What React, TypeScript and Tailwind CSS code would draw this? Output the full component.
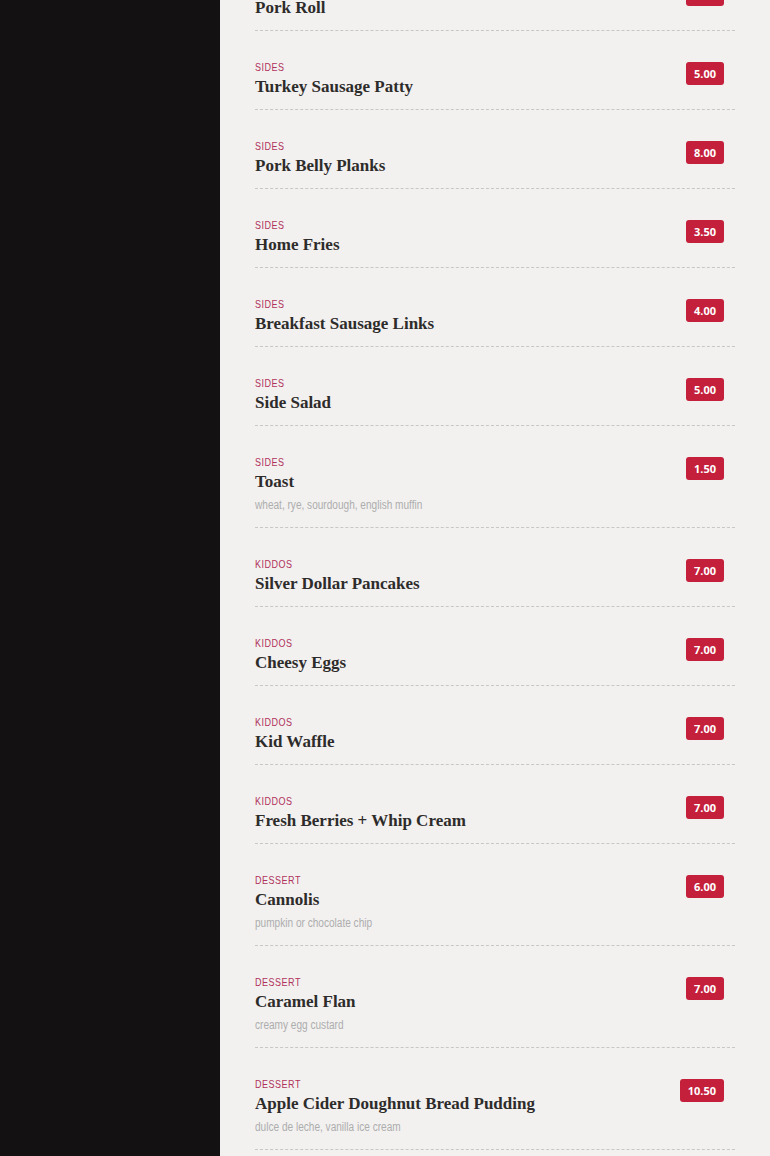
// Menu list page — sidebar + scrolled list of menu items
type MenuItem = {
  category: string;
  name: string;
  price: string;
  description?: string;
};

const items: MenuItem[] = [
  { category: "Sides", name: "Pork Roll", price: "4.00" },
  { category: "Sides", name: "Turkey Sausage Patty", price: "5.00" },
  { category: "Sides", name: "Pork Belly Planks", price: "8.00" },
  { category: "Sides", name: "Home Fries", price: "3.50" },
  { category: "Sides", name: "Breakfast Sausage Links", price: "4.00" },
  { category: "Sides", name: "Side Salad", price: "5.00" },
  {
    category: "Sides",
    name: "Toast",
    price: "1.50",
    description: "wheat, rye, sourdough, english muffin",
  },
  { category: "Kiddos", name: "Silver Dollar Pancakes", price: "7.00" },
  { category: "Kiddos", name: "Cheesy Eggs", price: "7.00" },
  { category: "Kiddos", name: "Kid Waffle", price: "7.00" },
  { category: "Kiddos", name: "Fresh Berries + Whip Cream", price: "7.00" },
  {
    category: "Dessert",
    name: "Cannolis",
    price: "6.00",
    description: "pumpkin or chocolate chip",
  },
  {
    category: "Dessert",
    name: "Caramel Flan",
    price: "7.00",
    description: "creamy egg custard",
  },
  {
    category: "Dessert",
    name: "Apple Cider Doughnut Bread Pudding",
    price: "10.50",
    description: "dulce de leche, vanilla ice cream",
  },
];

function MenuRow({ item }: { item: MenuItem }) {
  return (
    <div
      className={`flex items-start justify-between border-b border-dashed border-[#c9c7c5] pt-[29px] pr-[11px] ${
        item.description ? "pb-[10px]" : "pb-[11px]"
      }`}
    >
      <div className="flex flex-col items-start">
        {/* condensed label: no narrow face installed, so squeeze Liberation Sans */}
        <span className="inline-block origin-left scale-x-[0.82] font-['Liberation_Sans',sans-serif] text-[11px] leading-[14px] uppercase tracking-[0.6px] text-[#b0325a]">
          {item.category}
        </span>
        <span className="mt-[2px] font-['Liberation_Serif',serif] font-bold text-[17px] leading-[22px] text-[#2e2c2b]">
          {item.name}
        </span>
        {item.description && (
          <span className="inline-block origin-left scale-x-[0.84] whitespace-nowrap font-['Liberation_Sans',sans-serif] text-[12px] leading-[24px] text-[#adadad]">
            {item.description}
          </span>
        )}
      </div>
      <span className="mt-[2px] rounded-[3px] bg-[#c41f3b] px-[8px] font-['Open_Sans',sans-serif] text-[11px] font-bold leading-[23px] text-white">
        {item.price}
      </span>
    </div>
  );
}

export default function App() {
  return (
    <div className="flex h-[1156px] overflow-hidden bg-[#f2f1f0]">
      {/* Sidebar */}
      <aside className="w-[220px] shrink-0 bg-[#131111]" />

      {/* Main list, scrolled so the first row is cut at the top */}
      <main className="flex-1 px-[35px]">
        <div className="-mt-[48px]">
          {items.map((item) => (
            <MenuRow key={item.name} item={item} />
          ))}
        </div>
      </main>
    </div>
  );
}
